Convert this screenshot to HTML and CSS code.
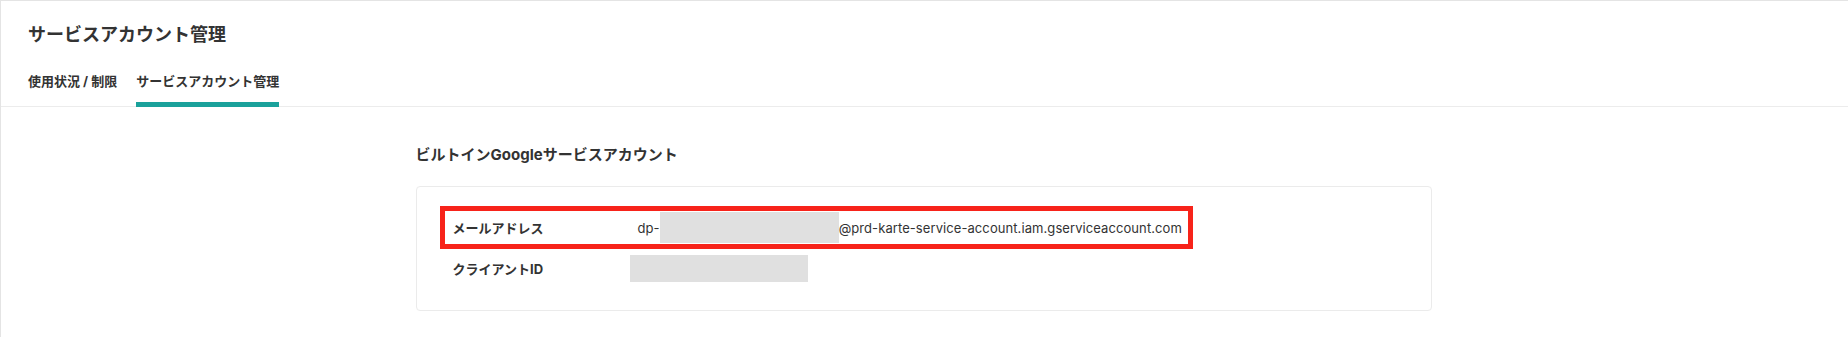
FILE: index.html
```html
<!DOCTYPE html>
<html lang="ja">
<head>
  <meta charset="UTF-8">
  <title>サービスアカウント管理</title>
  <link rel="stylesheet" href="styles.css">
</head>
<body>

<div class="pagina">
  <div class="cabecalho">
    <h1 class="titulo">サービスアカウント管理</h1>
    <div class="abas">
      <a class="aba">使用状況 / 制限</a>
      <a class="aba ativa">サービスアカウント管理</a>
    </div>
  </div>

  <div class="conteudo">
    <h2 class="secao">ビルトインGoogleサービスアカウント</h2>
    <div class="cartao">
      <div class="linha destaque">
        <span class="rotulo">メールアドレス</span>
        <span class="valor">dp-<span class="oculto alto"></span>@prd-karte-service-account.iam.gserviceaccount.com</span>
      </div>
      <div class="linha">
        <span class="rotulo">クライアントID</span>
        <span class="valor"><span class="oculto"></span></span>
      </div>
    </div>
  </div>
</div>

</body>
</html>
```

FILE: styles.css
```css
body {
  margin: 0;
  padding: 0;
  background: #fff;
  color: #333;
  font-family: "Inter", "Noto Sans CJK JP", sans-serif;
}

.pagina {
  min-height: 336px;
  border-top: 1px solid #e4e4e4;
  border-left: 1px solid #e4e4e4;
}

.cabecalho {
  padding: 0 27px;
  border-bottom: 1px solid #ececec;
}

.titulo {
  margin: 0;
  padding-top: 21px;
  font-size: 18px;
  line-height: 26px;
  font-weight: 700;
  color: #333;
}

.abas {
  display: flex;
  gap: 19px;
  margin-top: 23px;
  margin-bottom: -1px;
}

.aba {
  font-size: 13px;
  line-height: 20px;
  font-weight: 700;
  color: #333;
  padding-bottom: 16px;
  cursor: pointer;
}

.aba.ativa {
  padding-bottom: 11px;
  border-bottom: 5px solid #1aa19b;
}

.conteudo {
  width: 1016px;
  margin: 0 auto;
  padding: 37px 2px 0 0;
}

.secao {
  margin: 0 0 20px;
  font-size: 15px;
  line-height: 22px;
  font-weight: 700;
  color: #333;
}

.cartao {
  border: 1px solid #ebebeb;
  border-radius: 4px;
  padding: 24px 28px 25px;
  display: flex;
  flex-direction: column;
  align-items: flex-start;
  gap: 8px;
}

.linha {
  display: flex;
  align-items: center;
  height: 33px;
  padding: 0 6px 0 8px;
}

/* caixa vermelha de anotação */
.linha.destaque {
  outline: 5px solid #f7231a;
}

.rotulo {
  width: 177px;
  font-size: 13px;
  font-weight: 700;
  color: #333;
}

.valor {
  display: flex;
  align-items: center;
  font-size: 13px;
  letter-spacing: 0.08px;
  color: #333;
}

.destaque .valor {
  padding-left: 8px;
}

.oculto {
  display: inline-block;
  width: 178px;
  height: 27px;
  background: #e0e0e0;
}

.oculto.alto {
  width: 179px;
  height: 31px;
}
```
